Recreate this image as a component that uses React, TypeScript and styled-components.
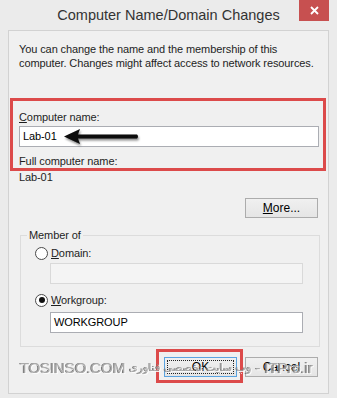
import React from 'react';
import styled, { createGlobalStyle } from 'styled-components';

const GlobalStyle = createGlobalStyle`
  html, body {
    margin: 0;
    padding: 0;
    background: #ebebeb;
  }
  * {
    box-sizing: border-box;
  }
`;

const Window = styled.div`
  position: relative;
  width: 337px;
  height: 398px;
  padding-bottom: 4px;
  background: #ebebeb;
  font-family: 'Liberation Sans', Arial, sans-serif;
  font-size: 11px;
  letter-spacing: -0.1px;
  color: #1e1e1e;
  display: flex;
  flex-direction: column;
  overflow: hidden;
`;

const TitleBar = styled.div`
  height: 30px;
  display: grid;
  grid-template-columns: 1fr auto 1fr;
  align-items: start;
`;

const Title = styled.div`
  grid-column: 2;
  font-size: 14.5px;
  letter-spacing: 0;
  line-height: 30px;
  color: #333;
  white-space: nowrap;
`;

const CloseBtn = styled.button`
  grid-column: 3;
  justify-self: end;
  margin-right: 8px;
  width: 30px;
  height: 21px;
  border: none;
  padding: 0;
  background: #c75050;
  color: #fff;
  display: flex;
  align-items: center;
  justify-content: center;
`;

const Client = styled.div`
  margin: 0 8px;
  border: 1px solid #d2d2d2;
  background: #f0f0f0;
  padding: 11px 9px 0 10px;
  flex: 1;
  display: flex;
  flex-direction: column;
  white-space: nowrap;
`;

const Description = styled.p`
  margin: 0;
  line-height: 14px;
`;

const Highlight = styled.div`
  margin: 28px -7px 0 -9px;
  border: 3px solid #dc4a4a;
  padding: 9px 4px 0 6px;
  display: flex;
  flex-direction: column;
`;

const Label = styled.div<{ $lh?: number; $mt?: number }>`
  line-height: ${({ $lh }) => {
    return $lh ?? 14;
  }}px;
  margin-top: ${({ $mt }) => {
    return $mt ?? 0;
  }}px;
`;

const InputWrap = styled.div`
  position: relative;
  margin-top: 2px;
`;

const TextBox = styled.div<{ $disabled?: boolean; $w?: number }>`
  height: 21px;
  width: ${({ $w }) => {
    return $w ? `${$w}px` : '100%';
  }};
  border: 1px solid
    ${({ $disabled }) => {
      return $disabled ? '#d9d9d9' : '#abadb3';
    }};
  background: ${({ $disabled }) => {
    return $disabled ? '#f4f4f4' : '#ffffff';
  }};
  padding: 0 3px;
  line-height: 19px;
  color: #000;
`;

const Arrow = styled.svg`
  position: absolute;
  left: 42px;
  top: 1px;
`;

const ButtonRow = styled.div<{ $mt: number }>`
  display: flex;
  justify-content: flex-end;
  gap: 8px;
  margin-top: ${({ $mt }) => {
    return $mt;
  }}px;
  margin-right: 1px;
`;

const Button = styled.button<{ $default?: boolean }>`
  position: relative;
  width: 73px;
  height: 20px;
  padding: 0;
  font-family: inherit;
  font-size: 12px;
  color: #000;
  background: linear-gradient(#f0f0f0, #e5e5e5);
  border: 1px solid
    ${({ $default }) => {
      return $default ? '#5aa3e0' : '#acacac';
    }};
  ${({ $default }) => {
    return $default
      ? `&::before {
          content: '';
          position: absolute;
          inset: 2px;
          border: 1px dotted #222;
        }`
      : '';
  }}
`;

const Callout = styled.div`
  position: relative;
  &::after {
    content: '';
    position: absolute;
    inset: -8px -6px -6px -8px;
    border: 3px solid #dc4a4a;
    pointer-events: none;
  }
`;

const Group = styled.fieldset`
  margin: 10px -1px 0 1px;
  padding: 0 0 13px 0;
  border: 1px solid #dcdcdc;
  display: flex;
  flex-direction: column;
`;

const Legend = styled.legend`
  margin-left: 6px;
  padding: 0 2px;
  line-height: 14px;
`;

const RadioRow = styled.div<{ $mt: number }>`
  display: flex;
  align-items: center;
  gap: 3px;
  margin: ${({ $mt }) => {
    return $mt;
  }}px 0 0 14px;
  line-height: 14px;
`;

const Radio = styled.span<{ $checked?: boolean }>`
  width: 13px;
  height: 13px;
  border-radius: 50%;
  border: 1px solid #4a4a4a;
  background: #fff;
  display: inline-flex;
  align-items: center;
  justify-content: center;
  &::after {
    content: '';
    width: 6px;
    height: 6px;
    border-radius: 50%;
    background: ${({ $checked }) => {
      return $checked ? '#111' : 'transparent';
    }};
  }
`;

const GroupInput = styled.div<{ $mt: number }>`
  margin: ${({ $mt }) => {
    return $mt;
  }}px 0 0 29px;
`;

const Watermark = styled.div`
  position: absolute;
  left: 20px;
  top: 359px;
  display: flex;
  align-items: center;
  gap: 4px;
  font-size: 15px;
  color: #a0a0a0;
  text-shadow:
    1px 1px 0 #fff,
    -1px 0 0 #666;
  pointer-events: none;
  white-space: nowrap;
  opacity: 0.85;
`;

const Persian = styled.span`
  font-family: 'DejaVu Sans', sans-serif;
  font-size: 11px;
  direction: rtl;
`;

const App = (): React.ReactElement => {
  return (
    <>
      <GlobalStyle />
      <Window>
        <TitleBar>
          <Title>Computer Name/Domain Changes</Title>
          <CloseBtn aria-label="Close">
            <svg width="9" height="9" viewBox="0 0 9 9">
              <path d="M1 1 L8 8 M8 1 L1 8" stroke="#fff" strokeWidth="1.8" />
            </svg>
          </CloseBtn>
        </TitleBar>
        <Client>
          <Description>
            You can change the name and the membership of this
            <br />
            computer. Changes might affect access to network resources.
          </Description>
          <Highlight>
            <Label>
              <u>C</u>omputer name:
            </Label>
            <InputWrap>
              <TextBox>Lab-01</TextBox>
              <Arrow width="82" height="22" viewBox="0 0 82 22">
                <defs>
                  <filter id="sh" x="-20%" y="-50%" width="140%" height="200%">
                    <feDropShadow dx="1" dy="2" stdDeviation="1.2" floodColor="#000" floodOpacity="0.45" />
                  </filter>
                </defs>
                <path
                  d="M3 9.5 L19 2 L17 7.5 L76 7.5 Q78 9.5 76 11.5 L17 11.5 L19 17 Z"
                  fill="#0a0a0a"
                  filter="url(#sh)"
                />
              </Arrow>
            </InputWrap>
            <Label $mt={8} $lh={13}>
              Full computer name:
            </Label>
          </Highlight>
          <Label $lh={12}>Lab-01</Label>
          <ButtonRow $mt={15}>
            <Button>
              <u>M</u>ore...
            </Button>
          </ButtonRow>
          <Group>
            <Legend>Member of</Legend>
            <RadioRow $mt={4}>
              <Radio />
              <span>
                <u>D</u>omain:
              </span>
            </RadioRow>
            <GroupInput $mt={3}>
              <TextBox $disabled $w={253} />
            </GroupInput>
            <RadioRow $mt={9}>
              <Radio $checked />
              <span>
                <u>W</u>orkgroup:
              </span>
            </RadioRow>
            <GroupInput $mt={5}>
              <TextBox $w={253}>WORKGROUP</TextBox>
            </GroupInput>
          </Group>
          <ButtonRow $mt={10}>
            <Callout>
              <Button $default>OK</Button>
            </Callout>
            <Button>Cancel</Button>
          </ButtonRow>
        </Client>
        <Watermark>
          <span>TOSINSO.COM</span>
          <Persian>وب سایت تخصصی فناوری</Persian>
          <span>- ITPro.ir</span>
        </Watermark>
      </Window>
    </>
  );
};

export default App;
